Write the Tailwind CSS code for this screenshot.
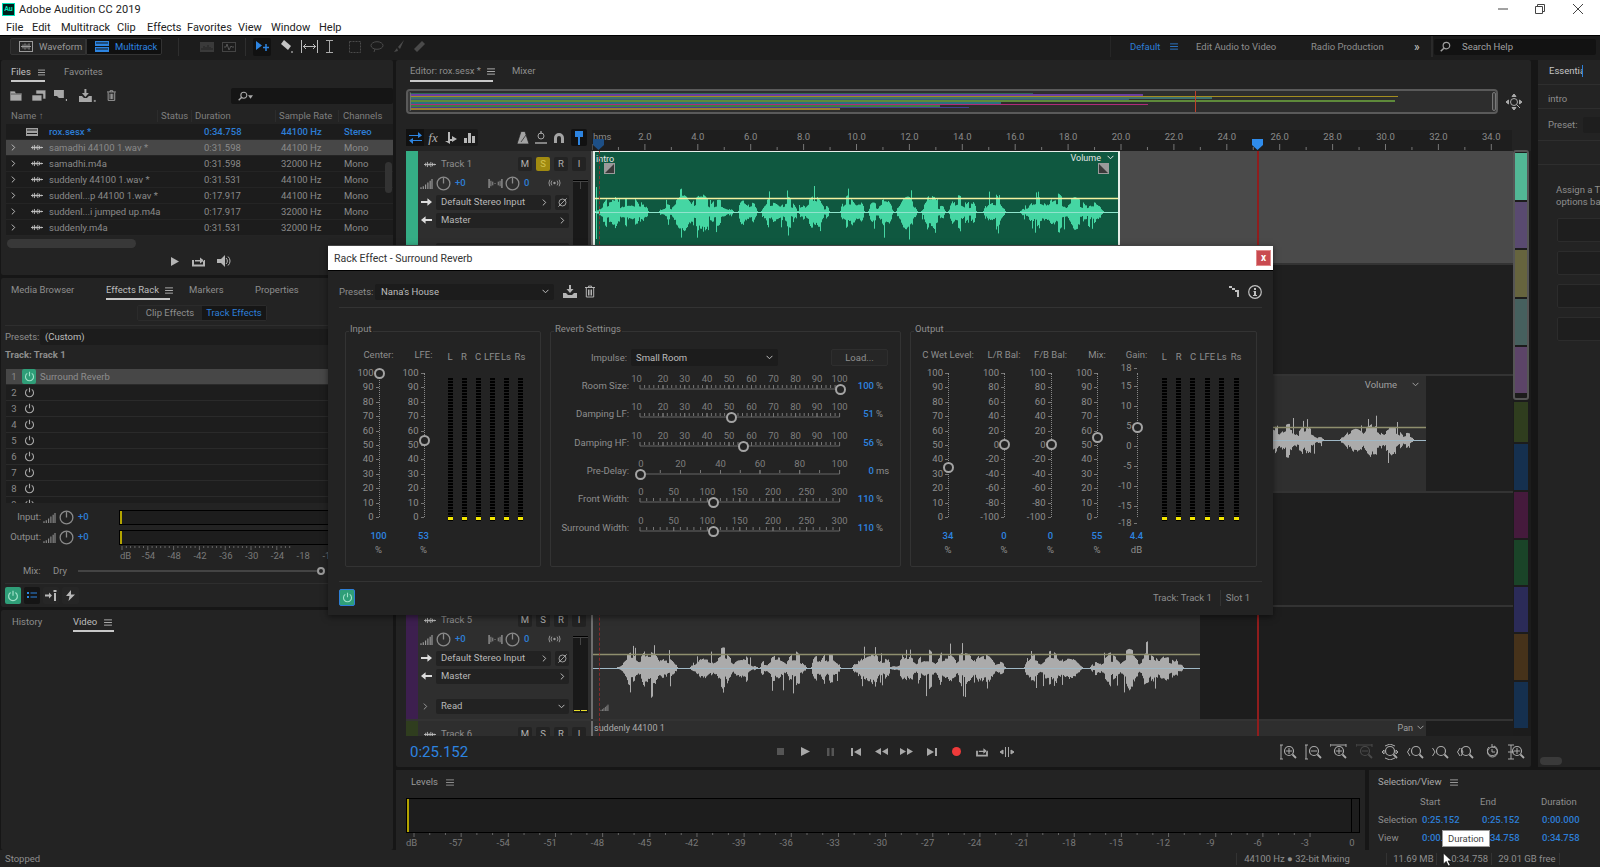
<!DOCTYPE html>
<html lang="en">
<head>
<meta charset="UTF-8">
<title>Adobe Audition CC 2019</title>
<script src="https://cdn.jsdelivr.net/npm/@tailwindcss/browser@4"></script>
</head>
<body class="relative w-[1600px] h-[867px] overflow-hidden bg-[#161616] font-['Roboto',sans-serif] text-[9.500px] leading-[12px] text-[#8e8e8e]">

<!-- shared icons -->
<svg class="absolute w-0 h-0">
  <symbol id="menu" viewBox="0 0 9 8"><path d="M0 1h9M0 4h9M0 7h9" stroke="currentColor" fill="none"/></symbol>
  <symbol id="power" viewBox="0 0 12 12"><path d="M3.600 2.600a4.400 4.400 0 1 0 4.800 0M6 .8v5" stroke="currentColor" stroke-width="1.200" fill="none"/></symbol>
  <symbol id="mono" viewBox="0 0 14 8"><path d="M0 4h14M2 2v4M4 1v6M6 2.500v3M8 1v6M10 2v4M12 3v2" stroke="currentColor" fill="none"/></symbol>
  <symbol id="knob" viewBox="0 0 16 16"><circle cx="8" cy="8" r="6.800" stroke="currentColor" stroke-width="1.400" fill="none"/><path d="M8 8V1.500" stroke="currentColor" stroke-width="1.400"/></symbol>
  <symbol id="bars" viewBox="0 0 14 12"><path d="M1 12v-2M3.500 12V9M6 12V7M8.500 12V5M11 12V3M13 12V1" stroke="currentColor" stroke-width="1.300"/></symbol>
  <symbol id="chev-r" viewBox="0 0 6 8"><path d="M1 .5 4.500 4 1 7.500" stroke="currentColor" stroke-width="1.200" fill="none"/></symbol>
  <symbol id="chev-d" viewBox="0 0 8 6"><path d="M.5 1 4 4.500 7.500 1" stroke="currentColor" stroke-width="1.200" fill="none"/></symbol>
  <symbol id="mag" viewBox="0 0 12 12"><circle cx="5" cy="5" r="3.600" stroke="currentColor" stroke-width="1.300" fill="none"/><path d="m7.800 7.800 3.400 3.400" stroke="currentColor" stroke-width="1.600"/></symbol>
  <symbol id="trash" viewBox="0 0 10 12"><path d="M0 2h10M3.500 2V.6h3V2M1.300 2.500v9h7.400v-9M3.500 4v6M5 4v6M6.500 4v6" stroke="currentColor" fill="none"/></symbol>
  <symbol id="saveto" viewBox="0 0 14 13"><path d="M6 0h2v4h2.500L7 8 3.500 4H6zM0 8h3l2 2h4l2-2h3v5H0z" fill="currentColor"/></symbol>
  <symbol id="arrow-r" viewBox="0 0 12 8"><path d="M0 3h7V0l5 4-5 4V5H0z" fill="currentColor"/></symbol>
  <symbol id="arrow-l" viewBox="0 0 12 8"><path d="M12 3H5V0L0 4l5 4V5h7z" fill="currentColor"/></symbol>
  <symbol id="panico" viewBox="0 0 16 12"><path d="M1 1v10M15 1v10" stroke="currentColor" stroke-width="1.400"/><path d="M3 3v6M5 4v4M11 4v4M13 3v6M7.500 5.500v1" stroke="currentColor"/></symbol>
  <symbol id="radio" viewBox="0 0 14 8"><circle cx="7" cy="4" r="1.300" fill="currentColor"/><path d="M4.200 1.500a4 4 0 0 0 0 5M9.800 1.500a4 4 0 0 1 0 5M2 .5a7 7 0 0 0 0 7M12 .5a7 7 0 0 1 0 7" stroke="currentColor" fill="none"/></symbol>
  <symbol id="noslash" viewBox="0 0 12 12"><circle cx="6" cy="6" r="3.800" stroke="currentColor" fill="none"/><path d="M1.500 10.500l9-9" stroke="currentColor"/></symbol>
  <symbol id="fade-in" viewBox="0 0 11 11"><rect width="11" height="11" fill="#9a9a9a"/><path d="M1 10 10 1v9z" fill="#3a3a3a"/></symbol>
  <symbol id="fade-out" viewBox="0 0 11 11"><rect width="11" height="11" fill="#9a9a9a"/><path d="M1 1l9 9H1z" fill="#3a3a3a"/></symbol>
</svg>

<!-- title bar -->
<header class="h-[36px] bg-white border-b border-black text-[#222] text-[11px] leading-[14px]">
  <div class="flex items-center h-[19px] pl-[2px]">
    <div class="w-[13px] h-[13px] bg-[#00201d] border border-[#00e4bb] text-[#00e4bb] text-[7px] leading-[11px] font-bold text-center">Au</div>
    <span class="ml-[4px] tracking-[0.1px]">Adobe Audition CC 2019</span>
    <div class="ml-auto flex items-center pr-[17px] pb-[2px] text-[#444]">
      <svg class="w-[10px] h-[10px]"><path d="M0 5h10" stroke="currentColor"/></svg>
      <svg class="w-[10px] h-[10px] ml-[27px]"><path d="M.5 2.500h7v7h-7zM2.500 2.500v-2h7v7h-2" stroke="currentColor" fill="none"/></svg>
      <svg class="w-[10px] h-[10px] ml-[28px]"><path d="M0 0l10 10M10 0 0 10" stroke="currentColor"/></svg>
    </div>
  </div>
  <nav class="flex h-[16px] items-center pl-[6px] pt-[1px]">
    <span class="w-[26px]">File</span><span class="w-[29px]">Edit</span><span class="w-[56px]">Multitrack</span><span class="w-[30px]">Clip</span><span class="w-[40px]">Effects</span><span class="w-[51px]">Favorites</span><span class="w-[33px]">View</span><span class="w-[48px]">Window</span><span>Help</span>
  </nav>
</header>

<!-- toolbar -->
<div class="flex items-center h-[24px] pb-[3px] pl-[10px] bg-[#1c1c1c]">
  <div class="flex items-center w-[76px] h-[17px] pl-[8px] bg-[#262626] border border-[#333] rounded-l-[2px] text-[#9a9a9a]">
    <svg class="w-[14px] h-[11px]" viewBox="0 0 14 11"><rect x=".5" y=".5" width="13" height="10" fill="none" stroke="currentColor"/><path d="M2 5.500h10M4 3.500v4M6 2.500v6M8 3.500v4M10 2.500v6" stroke="currentColor"/></svg>
    <span class="ml-[6px]">Waveform</span>
  </div>
  <div class="flex items-center w-[76px] h-[17px] pl-[8px] bg-[#101010] border border-[#333] rounded-r-[2px] text-[#2d84e0]">
    <svg class="w-[14px] h-[11px]" viewBox="0 0 14 11"><path d="M0 0h14v5H0zM0 6h14v5H0z" fill="currentColor"/><path d="M1 2h12M1 8h12" stroke="#101010"/></svg>
    <span class="ml-[6px]">Multitrack</span>
  </div>
  <div class="ml-[16px] w-[1px] h-[18px] bg-[#2e2e2e]"></div>
  <div class="ml-[21px] flex gap-[8px] text-[#4a4a4a]">
    <svg class="w-[14px] h-[10px]" viewBox="0 0 14 10"><rect width="14" height="10" fill="#3a3a3a"/><path d="M2 8V6M4 8V4M6 8V5M8 8V3M10 8V5M12 8V6" stroke="#222"/></svg>
    <svg class="w-[14px] h-[10px]" viewBox="0 0 14 10"><rect x=".5" y=".5" width="13" height="9" fill="none" stroke="#444"/><path d="M2 5h2l1-3 2 6 2-4 1 1h2" stroke="#555" fill="none"/></svg>
  </div>
  <div class="ml-[9px] w-[1px] h-[18px] bg-[#2e2e2e]"></div>
  <div class="ml-[7px] flex items-center justify-center w-[18px] h-[18px] bg-[#111] rounded-[2px] text-[#2d84e0]">
    <svg class="w-[15px] h-[13px]" viewBox="0 0 15 13"><path d="M1 1l6 4.500L1 10z" fill="currentColor"/><path d="M11 4v7M8 7.500h6" stroke="currentColor" stroke-width="1.500"/></svg>
  </div>
  <svg class="ml-[8px] w-[15px] h-[15px] text-[#c4c4c4]" viewBox="0 0 15 15"><path d="M5 1l7 6-3 4-7-6z" fill="currentColor"/><path d="M12 12h2v2h-2z" fill="#777"/></svg>
  <svg class="ml-[7px] w-[17px] h-[13px] text-[#bbb]" viewBox="0 0 17 13"><path d="M.5 0v13M16.500 0v13M2 6.500h13M5 4 2.500 6.500 5 9M12 4l2.500 2.500L12 9" stroke="currentColor" fill="none"/></svg>
  <svg class="ml-[7px] w-[9px] h-[13px] text-[#aaa]" viewBox="0 0 9 13"><path d="M1 .5h7M1 12.500h7M4.500 .5v12" stroke="currentColor" fill="none"/></svg>
  <div class="ml-[15px] flex items-center gap-[9px] text-[#4a4a4a]">
    <svg class="w-[12px] h-[12px]" viewBox="0 0 12 12"><rect x=".5" y=".5" width="11" height="11" fill="none" stroke="currentColor" stroke-dasharray="2 1"/></svg>
    <svg class="w-[14px] h-[12px]" viewBox="0 0 14 12"><ellipse cx="7" cy="4.500" rx="6" ry="3.800" fill="none" stroke="currentColor"/><path d="M5 8l-1 3" stroke="currentColor"/></svg>
    <svg class="w-[12px] h-[13px]" viewBox="0 0 12 13"><path d="M11 0 5 7l2 2zM4 8 1 12l4-1z" fill="currentColor"/></svg>
    <svg class="w-[12px] h-[13px]" viewBox="0 0 12 13"><path d="M3 12l8-8-3-3-8 8z" fill="currentColor"/></svg>
  </div>
  <!-- workspace switcher: starts at x 1110 -->
  <div class="ml-auto flex items-center w-[490px] h-full text-[#8e8e8e]">
    <div class="w-[1px] h-full bg-[#262626]"></div>
    <span class="ml-[19px] w-[40px] text-[#2d7ed6]">Default</span>
    <svg class="w-[8px] h-[7px] text-[#2d7ed6]"><use href="#menu"/></svg>
    <span class="ml-[18px] w-[115px]">Edit Audio to Video</span>
    <span class="w-[103px]">Radio Production</span>
    <span class="w-[17px] text-[#ccc] text-[12px]">»</span>
    <div class="w-[2px] h-full bg-[#2a2a2a]"></div>
    <div class="ml-[1px] flex items-center w-[162px] h-[16px] pl-[6px] bg-[#121212] rounded-[2px] text-[#a0a0a0]">
      <svg class="w-[11px] h-[11px] -scale-x-100"><use href="#mag"/></svg>
      <span class="ml-[11px]">Search Help</span>
    </div>
  </div>
</div>

<div class="flex h-[790px]">
  <!-- left column -->
  <div class="w-[392px] ml-[1px] flex flex-col gap-[3px]">
    <!-- files -->
    <section class="h-[215px] bg-[#232323] rounded-[2px]">
      <div class="flex h-[21px] pl-[10px] pt-[6px]">
        <div class="flex w-[34px] h-[16px] items-start gap-[7px] border-b-2 border-[#c8c8c8] text-[#c0c0c0]"><span>Files</span><svg class="w-[8px] h-[7px] mt-[3px]"><use href="#menu"/></svg></div>
        <span class="ml-[19px]">Favorites</span>
      </div>
      <div class="flex items-center h-[21px] mt-[4px] pl-[9px] text-[#a8a8a8]">
        <svg class="w-[12px] h-[10px]" viewBox="0 0 12 10"><path d="M0 0h5l1 2h6v8H0zM1 3h10" fill="currentColor" stroke="#232323" stroke-width=".6"/></svg>
        <svg class="ml-[10px] w-[14px] h-[11px]" viewBox="0 0 14 11"><path d="M4 0h10v9h-3V4H4zM0 5h10v6H0z" fill="currentColor" stroke="#232323" stroke-width=".6"/></svg>
        <svg class="ml-[8px] w-[14px] h-[11px]" viewBox="0 0 14 11"><path d="M0 0h10v8H5L3 6H0zM12 9h2v2h-2z" fill="currentColor"/></svg>
        <svg class="ml-[12px] w-[17px] h-[13px]" viewBox="0 0 17 13"><path d="M5.500 0h2v4h2.500l-3.500 4L3 4h2.500zM0 7h3l2 2h3l2-2h3v6H0z" fill="currentColor"/><path d="M15 11h2v2h-2z" fill="#888"/></svg>
        <svg class="ml-[11px] w-[9px] h-[11px]"><use href="#trash"/></svg>
        <div class="ml-[115px] flex items-center w-[164px] h-[16px] pl-[7px] bg-[#151515] rounded-[2px] text-[#aaa]">
          <svg class="w-[10px] h-[10px] -scale-x-100"><use href="#mag"/></svg>
          <svg class="w-[5px] h-[4px] mt-[3px]" viewBox="0 0 6 4"><path d="M0 0h6L3 4z" fill="currentColor"/></svg>
        </div>
      </div>
      <div class="grid grid-cols-[146px_34px_84px_63px_60px] h-[15px] mt-[2px] pl-[10px] items-center text-[#7f7f7f]">
        <span>Name ↑</span>
        <span class="pl-[3px] border-l border-[#2c2c2c]">Status</span>
        <span class="pl-[3px] border-l border-[#2c2c2c]">Duration</span>
        <span class="pl-[3px] border-l border-[#2c2c2c]">Sample Rate</span>
        <span class="pl-[4px] border-l border-[#2c2c2c]">Channels</span>
      </div>
      <div class="relative ml-[5px] w-[387px] h-[112px] mt-[1px] bg-[#1c1c1c]" id="file-list"></div>
      <div class="flex items-center h-[24px] mt-[13px] pl-[170px] text-[#b4b4b4]">
        <svg class="w-[8px] h-[9px]" viewBox="0 0 8 9"><path d="M0 0l8 4.500L0 9z" fill="currentColor"/></svg>
        <svg class="ml-[13px] w-[13px] h-[11px]" viewBox="0 0 13 11"><path d="M0 4v6.500h13V4h-2v4.500H2V4zM3 4h5V1.500L12 4.500 8 7.500V5.500H3z" fill="currentColor"/></svg>
        <svg class="ml-[10px] w-[17px] h-[12px]" viewBox="0 0 17 12"><path d="M0 4h4l4-4v12L4 8H0z" fill="currentColor" transform="translate(2)"/><path d="M11 3a4 4 0 0 1 0 6M13 1.500a6 6 0 0 1 0 9" stroke="currentColor" fill="none"/></svg>
      </div>
    </section>
    <!-- effects rack -->
    <section class="h-[329px] bg-[#232323] rounded-[2px]">
      <div class="flex h-[22px] pl-[10px] pt-[6px]">
        <span class="w-[95px]">Media Browser</span>
        <div class="flex w-[64px] h-[16px] gap-[6px] items-start border-b-2 border-[#c8c8c8] text-[#bdbdbd]"><span class="whitespace-nowrap">Effects Rack</span><svg class="w-[8px] h-[7px] mt-[3px] shrink-0"><use href="#menu"/></svg></div>
        <span class="ml-[19px] w-[66px]">Markers</span>
        <span>Properties</span>
      </div>
      <div class="flex justify-center ml-[136px] mt-[5px] w-[130px] h-[16px] bg-[#1c1c1c] rounded-[2px] border border-[#2b2b2b]">
        <span class="flex-1 text-center text-[#8e8e8e] bg-[#242424] leading-[14px]">Clip Effects</span>
        <span class="flex-1 text-center text-[#2d7ed6] bg-[#161616] leading-[14px]">Track Effects</span>
      </div>
      <div class="mt-[4px] h-[1px] bg-[#2e2e2e] mx-[4px]"></div>
      <div class="flex items-center mt-[3px] h-[16px] pl-[4px]">
        <span class="w-[35px]">Presets:</span>
        <div class="flex items-center flex-1 h-[16px] pl-[5px] pr-[3px] bg-[#1c1c1c] rounded-[2px] text-[#bcbcbc]"><span>(Custom)</span><svg class="ml-[264px] w-[7px] h-[5px]"><use href="#chev-d"/></svg></div>
      </div>
      <div class="h-[14px] mt-[4px] pl-[4px] font-bold text-[#8e8e8e]">Track: Track 1</div>
      <div id="rack-list" class="ml-[5px] mt-[6px] h-[134px] overflow-hidden bg-[#1d1d1d]"></div>
      <div class="mt-[4px] h-[20px] flex items-center">
        <span class="w-[40px] text-right">Input:</span>
        <svg class="ml-[2px] w-[13px] h-[11px] text-[#888]"><use href="#bars"/></svg>
        <svg class="ml-[3px] w-[15px] h-[15px] text-[#8a8a8a]"><use href="#knob"/></svg>
        <span class="ml-[4px] w-[41px] text-[#2d7ed6] font-medium">+0</span>
        <div class="relative w-[270px] h-[15px] bg-[#1d1d1d] border border-black"><div class="absolute inset-y-0 left-0 w-[2px] bg-[#b3a400]"></div></div>
      </div>
      <div class="h-[20px] flex items-center">
        <span class="w-[40px] text-right">Output:</span>
        <svg class="ml-[2px] w-[13px] h-[11px] text-[#888]"><use href="#bars"/></svg>
        <svg class="ml-[3px] w-[15px] h-[15px] text-[#8a8a8a]"><use href="#knob"/></svg>
        <span class="ml-[4px] w-[41px] text-[#2d7ed6] font-medium">+0</span>
        <div class="relative w-[270px] h-[15px] bg-[#1d1d1d] border border-black"><div class="absolute inset-y-0 left-0 w-[2px] bg-[#b3a400]"></div></div>
      </div>
      <svg id="rack-ticks" class="block -mt-[1px] ml-[120px] w-[270px] h-[5px]"></svg>
      <div id="rack-scale" class="relative ml-[120px] w-[270px] h-[10px] leading-[10px] text-[#7a7a7a]"></div>
      <div class="flex items-center h-[16px] mt-[2px]">
        <span class="ml-[22px] w-[30px]">Mix:</span>
        <span class="w-[25px]">Dry</span>
        <div class="relative w-[239px] h-[2px] bg-[#444]"><div class="absolute -right-[8px] -top-[3px] w-[8px] h-[8px] rounded-full border-2 border-[#9a9a9a] bg-[#232323]"></div></div>
      </div>
      <div class="mt-[4px] mx-[4px] h-[1px] bg-[#2e2e2e]"></div>
      <div class="flex gap-[3px] mt-[3px] pl-[4px]">
        <div class="flex items-center justify-center w-[16px] h-[17px] bg-[#2f9e78] rounded-[2px] text-[#9fe0c8]"><svg class="w-[12px] h-[12px]"><use href="#power"/></svg></div>
        <div class="flex items-center justify-center w-[16px] h-[17px] bg-[#151515] rounded-[2px] text-[#2d84e0]"><svg class="w-[10px] h-[7px]" viewBox="0 0 10 7"><path d="M0 0h2v2H0zM0 4h2v2H0zM3.500 .5H10v1H3.500zM3.500 4.500H10v1H3.500z" fill="currentColor"/></svg></div>
        <div class="flex items-center justify-center w-[16px] h-[17px] bg-[#262626] rounded-[2px] text-[#b8b8b8]"><svg class="w-[12px] h-[11px]" viewBox="0 0 12 11"><path d="M0 4.500h4V2.500l3 3-3 3V6.500H0zM9 3h2v8H9zM8.500 0h3v2h-3z" fill="currentColor"/></svg></div>
        <div class="flex items-center justify-center w-[17px] h-[17px] bg-[#262626] rounded-[2px] text-[#b8b8b8]"><svg class="w-[9px] h-[11px]" viewBox="0 0 9 11"><path d="M5 0 0 6h3.500L2.500 11 9 4.500H5z" fill="currentColor"/></svg></div>
      </div>
    </section>
    <!-- history / video -->
    <section class="flex-1 bg-[#232323] rounded-[2px] flex pl-[11px] pt-[6px] items-start">
      <span class="w-[61px]">History</span>
      <div class="flex w-[41px] h-[16px] gap-[7px] items-start border-b-2 border-[#c8c8c8] text-[#bdbdbd]"><span>Video</span><svg class="w-[8px] h-[7px] mt-[3px]"><use href="#menu"/></svg></div>
    </section>
  </div>

  <!-- editor + bottom row -->
  <div class="ml-[3px] flex-1 flex flex-col gap-[3px]">
    <div class="flex h-[707px]">
      <!-- editor -->
      <section class="w-[1135px] bg-[#232323] rounded-[2px] pl-[10px]">
        <div class="flex h-[25px] pt-[5px] pl-[4px]">
          <div class="flex w-[83px] h-[17px] gap-[6px] items-start border-b-2 border-[#c8c8c8] text-[#8e8e8e] whitespace-nowrap"><span>Editor: rox.sesx *</span><svg class="w-[8px] h-[7px] mt-[3px] shrink-0 text-[#bbb]"><use href="#menu"/></svg></div>
          <span class="ml-[19px]">Mixer</span>
        </div>
        <div class="flex items-center mt-[4px] h-[25px]">
          <div class="relative w-[1092px] h-[25px] bg-[#2d2d2d] border-2 border-[#5a5a5a] rounded-[4px] pl-[3px] pt-[1.500px] flex flex-col" id="overview"></div>
          <svg class="ml-[8px] w-[16px] h-[16px] text-[#aaa]" viewBox="0 0 16 16"><circle cx="8" cy="8" r="3.500" stroke="currentColor" fill="none"/><path d="M8 0l2 2.500H6zM8 16l2-2.500H6zM0 8l2.500-2v4zM16 8l-2.500-2v4zM10.500 10.500 14 14" stroke="currentColor" fill="currentColor"/></svg>
        </div>
        <div class="flex mt-[16px] h-[21px]">
          <div class="flex items-center w-[186px] h-[15px]">
            <div class="flex items-center h-[17px] bg-[#1a1a1a] rounded-[2px]">
              <div class="flex items-center justify-center w-[18px] h-[17px] bg-[#111] text-[#2d84e0]"><svg class="w-[13px] h-[12px]" viewBox="0 0 13 12"><path d="M0 3h9V0l4 3.500L9 6V4H0zM13 8H4V6L0 8.500 4 12V9h9z" fill="currentColor"/></svg></div>
              <span class="w-[18px] text-center italic text-[13px] text-[#b0b0b0] font-['Liberation_Serif',serif]">fx</span>
              <div class="flex items-center justify-center w-[18px]"><svg class="w-[12px] h-[12px] text-[#b8b8b8]" viewBox="0 0 12 12"><path d="M3 0h2v7h2V4l5 3-5 3V9H5v3L0 9h3z" fill="currentColor"/></svg></div>
              <div class="flex items-center justify-center w-[18px]"><svg class="w-[11px] h-[10px] text-[#b8b8b8]" viewBox="0 0 11 10"><path d="M0 5h3v5H0zM4 0h3v10H4zM8 3h3v7H8z" fill="currentColor"/></svg></div>
            </div>
            <div class="flex items-center ml-[39px] gap-[6px] text-[#a4a4a4]">
              <svg class="w-[12px] h-[13px]" viewBox="0 0 12 13"><path d="M4 .5h4L12 13H0zM4 11l5-7" stroke="#232323" stroke-width=".7" fill="currentColor"/></svg>
              <svg class="w-[12px] h-[13px]" viewBox="0 0 12 13"><circle cx="6" cy="5" r="3" fill="none" stroke="currentColor"/><path d="M6 0v3M0 12h12" stroke="currentColor" stroke-width="1.300"/></svg>
              <svg class="w-[12px] h-[12px]" viewBox="0 0 12 12"><path d="M1 11V6a5 5 0 0 1 10 0v5H8V6a2 2 0 0 0-4 0v5z" fill="currentColor"/></svg>
              <div class="flex items-center justify-center w-[16px] h-[17px] bg-[#111] rounded-[2px] text-[#2d84e0]"><svg class="w-[8px] h-[14px]" viewBox="0 0 8 14"><path d="M0 0h8v6H5v8H3V6H0z" fill="currentColor"/></svg></div>
            </div>
          </div>
          <div id="ruler" class="relative w-[920px] h-[21px] bg-[#1e1e1e] overflow-hidden"></div>
        </div>
        <div class="relative flex h-[585px] bg-[#1c1c1c]">
          <div id="tracks" class="w-[1107px] flex flex-col"></div>
          <div class="relative flex flex-col gap-[2px] w-[14px] pt-[2px] ml-[1px]" id="track-scroll"></div>
          <!-- playhead and start marker lie over the lanes -->
          <div class="absolute top-0 bottom-0 left-[851px] w-[2px] bg-[#8f1d1d]"></div>
          <div class="absolute top-0 bottom-0 left-[193px] border-l border-dashed border-[#a02828]/80"></div>
        </div>
        <div class="flex items-center h-[31px] text-[#a8a8a8]">
          <span class="ml-[4px] w-[358px] text-[15px] text-[#2d84e0]">0:25.152</span>
          <div class="w-[25px] flex justify-center"><div class="w-[7px] h-[7px] bg-[#555]"></div></div>
          <div class="w-[25px] flex justify-center"><svg class="w-[9px] h-[9px]" viewBox="0 0 9 9"><path d="M0 0l9 4.500L0 9z" fill="currentColor"/></svg></div>
          <div class="w-[25px] flex justify-center"><svg class="w-[7px] h-[8px] text-[#555]" viewBox="0 0 7 8"><path d="M0 0h2.500v8H0zM4.500 0H7v8H4.500z" fill="currentColor"/></svg></div>
          <div class="w-[25px] flex justify-center"><svg class="w-[10px] h-[8px]" viewBox="0 0 10 8"><path d="M0 0h2v8H0zM10 0v8L3 4z" fill="currentColor"/></svg></div>
          <div class="w-[26px] flex justify-center"><svg class="w-[13px] h-[7px]" viewBox="0 0 13 7"><path d="M6 0v7L0 3.500zM13 0v7L7 3.500z" fill="currentColor"/></svg></div>
          <div class="w-[25px] flex justify-center"><svg class="w-[13px] h-[7px]" viewBox="0 0 13 7"><path d="M0 0v7l6-3.500zM7 0v7l6-3.500z" fill="currentColor"/></svg></div>
          <div class="w-[25px] flex justify-center"><svg class="w-[10px] h-[8px]" viewBox="0 0 10 8"><path d="M8 0h2v8H8zM0 0v8l7-4z" fill="currentColor"/></svg></div>
          <div class="w-[25px] flex justify-center"><div class="w-[9px] h-[9px] rounded-full bg-[#ee3a3a]"></div></div>
          <div class="w-[25px] flex justify-center"><svg class="w-[12px] h-[10px]" viewBox="0 0 13 11"><path d="M0 4v6.500h13V4h-2v4.500H2V4zM3 4h5V1.500L12 4.500 8 7.500V5.500H3z" fill="currentColor"/></svg></div>
          <div class="w-[25px] flex justify-center"><svg class="w-[14px] h-[10px]" viewBox="0 0 14 10"><path d="M5.500 0v10M8.500 0v10M3 3 0 5l3 2zM11 3l3 2-3 2z" stroke="currentColor" fill="currentColor"/></svg></div>
          <div class="ml-[257px] flex items-center" id="zoom-icons"></div>
        </div>
      </section>
      <!-- essential sound -->
      <section class="ml-[7px] w-[62px] bg-[#232323] text-[#8e8e8e] overflow-hidden">
        <div class="h-[24px] pl-[11px] pt-[5px] text-[#c4c4c4]"><div class="w-[34px] h-[12px] overflow-hidden border-r border-[#2d7ed6]">Essential</div></div>
        <div class="h-[1px] bg-[#2e2e2e]"></div>
        <div class="h-[23px] pl-[10px] pt-[8px]">intro</div>
        <div class="h-[1px] bg-[#2e2e2e]"></div>
        <div class="flex items-center h-[31px] pl-[10px]"><span>Preset:</span><div class="ml-[5px] w-[40px] h-[16px] shrink-0 bg-[#1e1e1e] rounded-[2px]"></div></div>
        <div class="h-[1px] bg-[#2e2e2e]"></div>
        <div class="mt-[23px] h-[1px] bg-[#2e2e2e]"></div>
        <div class="pl-[18px] pt-[19px] w-[160px] h-[53px] leading-[12px]">Assign a Track Type for<br>options based on content</div>
        <div class="ml-[19px] mt-[0px] flex flex-col gap-[9px]">
          <div class="w-[60px] h-[24px] bg-[#1e1e1e] border border-[#2c2c2c] rounded-[2px]"></div>
          <div class="w-[60px] h-[24px] bg-[#1e1e1e] border border-[#2c2c2c] rounded-[2px]"></div>
          <div class="w-[60px] h-[24px] bg-[#1e1e1e] border border-[#2c2c2c] rounded-[2px]"></div>
          <div class="w-[60px] h-[24px] bg-[#1e1e1e] border border-[#2c2c2c] rounded-[2px]"></div>
        </div>
        <div class="mt-[416px] ml-[2px] w-[22px] h-[8px] rounded-full bg-[#3a3a3a]"></div>
      </section>
    </div>
    <!-- levels + selection -->
    <div class="flex h-[80px] gap-[4px]">
      <section class="w-[969px] bg-[#232323] pl-[10px]">
        <div class="flex items-center h-[24px] pl-[5px] text-[#9a9a9a]"><span>Levels</span><svg class="ml-[8px] w-[8px] h-[7px]"><use href="#menu"/></svg></div>
        <div class="relative w-[954px] h-[35px] mt-[4px] bg-[#1d1d1d] border border-black"><div class="absolute left-0 inset-y-0 w-[2px] bg-[#b3a400]"></div><div class="absolute right-0 inset-y-0 w-[8px] border-l border-black"></div></div>
        <svg id="lvl-ticks" class="block w-[954px] h-[4px]"></svg>
        <div id="lvl-scale" class="relative w-[954px] h-[11px] text-[#7a7a7a]"></div>
      </section>
      <section class="relative flex-1 bg-[#232323] pl-[9px]">
        <div class="flex items-center h-[24px] text-[#a8a8a8]"><span>Selection/View</span><svg class="ml-[8px] w-[8px] h-[7px]"><use href="#menu"/></svg></div>
        <div class="grid grid-cols-[44px_60px_60px_60px] mt-[2px] leading-[12px] gap-y-[6px]">
          <span></span><span class="-ml-[2px]">Start</span><span class="-ml-[2px]">End</span><span class="-ml-[1px]">Duration</span>
          <span>Selection</span><span class="text-[#2d7ed6] font-medium">0:25.152</span><span class="text-[#2d7ed6] font-medium">0:25.152</span><span class="text-[#2d7ed6] font-medium">0:00.000</span>
          <span>View</span><span class="text-[#2d7ed6] font-medium">0:00.000</span><span class="text-[#2d7ed6] font-medium">0:34.758</span><span class="text-[#2d7ed6] font-medium">0:34.758</span>
        </div>
        <!-- tooltip over the view row -->
        <div class="absolute left-[73px] top-[60px] w-[48px] h-[17px] bg-white border border-[#999] text-[#444] text-center leading-[15px]">Duration</div>
      </section>
    </div>
  </div>
</div>

<!-- status bar -->
<footer class="flex items-center h-[17px] bg-[#232323] pl-[5px] text-[#8e8e8e]">
  <span>Stopped</span>
  <div class="ml-[1196px] w-[1px] h-[12px] bg-[#333]"></div>
  <span class="ml-[7px] w-[142px]">44100 Hz ● 32-bit Mixing</span>
  <div class="w-[1px] h-[12px] bg-[#333]"></div>
  <span class="ml-[6px] w-[43px]">11.69 MB</span>
  <div class="w-[1px] h-[12px] bg-[#333]"></div>
  <span class="ml-[14px] w-[40px]">0:34.758</span>
  <div class="w-[1px] h-[12px] bg-[#333]"></div>
  <span class="ml-[6px] w-[61px]">29.01 GB free</span>
  <div class="w-[1px] h-[12px] bg-[#333]"></div>
</footer>

<!-- mouse pointer -->
<svg class="absolute left-[1442px] top-[853px] w-[12px] h-[14px]" viewBox="0 0 12 15"><path d="M1 0v12l3-3 2.500 5 2-1L6 8.500h4z" fill="#fff" stroke="#000" stroke-width=".7"/></svg>

<!-- floating rack effect window -->
<div class="absolute left-[328px] top-[245px] w-[945px] h-[370px] bg-[#232323] shadow-[0_2px_6px_rgba(0,0,0,0.5)]">
  <div class="flex items-center justify-between h-[26px] bg-white border-t border-[#444] border-b border-b-black pl-[6px] pr-[2px] text-[#333] text-[10.500px]">
    <span class="pt-[1px]">Rack Effect - Surround Reverb</span>
    <div class="flex items-center justify-center w-[15px] h-[16px] bg-[#c94a50] border border-[#e08a8a] text-white font-bold text-[10px] leading-[10px]">x</div>
  </div>
  <div class="flex items-center h-[37px] pt-[5px] mx-[11px] border-b border-[#333]">
    <span class="w-[36px]">Presets:</span>
    <div class="flex items-center w-[179px] h-[16px] pl-[6px] pr-[5px] bg-[#1c1c1c] rounded-[2px] text-[#bcbcbc]"><span>Nana's House</span><svg class="ml-auto w-[7px] h-[5px]"><use href="#chev-d"/></svg></div>
    <svg class="ml-[9px] w-[14px] h-[13px] text-[#b4b4b4]"><use href="#saveto"/></svg>
    <svg class="ml-[8px] w-[10px] h-[13px] text-[#b4b4b4]"><use href="#trash"/></svg>
    <svg class="ml-auto w-[10px] h-[11px] text-[#c0c0c0]" viewBox="0 0 10 11"><path d="M0 0h3v2H0zM3 2h3v2H3zM6 4h4v2H6zM8 6h2v5H8z" fill="currentColor"/></svg>
    <svg class="ml-[9px] w-[14px] h-[14px] text-[#c0c0c0]" viewBox="0 0 14 14"><circle cx="7" cy="7" r="6.300" fill="none" stroke="currentColor" stroke-width="1.200"/><path d="M6 3h2v2H6zM5.500 6H8v4h1v1H5v-1h1V7h-.5z" fill="currentColor"/></svg>
  </div>
  <div class="flex gap-[9px] mt-[23px] ml-[17px]">
    <!-- Input -->
    <div class="relative w-[196px] h-[236px] border border-[#333] rounded-[2px]">
      <span class="absolute left-[3px] -top-[9px] px-[1px] bg-[#232323]">Input</span>
      <div id="input-group" class="flex pl-[11px] pt-[16px]"></div>
    </div>
    <!-- Reverb settings -->
    <div class="relative w-[351px] h-[236px] border border-[#333] rounded-[2px]">
      <span class="absolute left-[3px] -top-[9px] px-[1px] bg-[#232323]">Reverb Settings</span>
      <div class="flex items-center mt-[17px] h-[17px]">
        <span class="w-[76px] text-right">Impulse:</span>
        <div class="flex items-center ml-[4px] w-[147px] h-[17px] pl-[5px] pr-[5px] bg-[#1c1c1c] rounded-[2px] text-[#bcbcbc]"><span>Small Room</span><svg class="ml-auto w-[7px] h-[5px]"><use href="#chev-d"/></svg></div>
        <div class="ml-[53px] w-[57px] h-[17px] bg-[#262626] border border-[#2e2e2e] rounded-[2px] text-center leading-[15px]">Load...</div>
      </div>
      <div id="reverb-rows" class="mt-[6px]"></div>
    </div>
    <!-- Output -->
    <div class="relative w-[347px] h-[236px] border border-[#333] rounded-[2px]">
      <span class="absolute left-[3px] -top-[9px] px-[1px] bg-[#232323]">Output</span>
      <div id="output-group" class="flex pl-[7px] pt-[16px]"></div>
    </div>
  </div>
  <div class="mt-[14px] mx-[11px] h-[1px] bg-[#333]"></div>
  <div class="flex items-center mt-[7px] h-[17px] pl-[11px] pr-[23px]">
    <div class="flex items-center justify-center w-[16px] h-[17px] bg-[#2f9e78] border border-[#2d7ed6] rounded-[2px] text-[#9fe0c8]"><svg class="w-[11px] h-[11px]"><use href="#power"/></svg></div>
    <span class="ml-auto">Track: Track 1</span>
    <div class="ml-[8px] w-[1px] h-[16px] bg-[#333]"></div>
    <span class="ml-[5px]">Slot 1</span>
  </div>
</div>

<script>
  // small seeded random so the waveforms come out the same every run
  function makeRand(seed) {
    return function () {
      seed = (seed * 16807) % 2147483647;
      return (seed - 1) / 2147483646;
    };
  }

  function wavePath(bursts, cy, amp, seed) {
    const rand = makeRand(seed);
    let d = '';
    bursts.forEach(function (b) {
      let level = 0.5, hold = 0;
      for (let x = b[0]; x <= b[1]; x++) {
        const t = (x - b[0]) / (b[1] - b[0]);
        // syllable-like swells inside each burst
        const env = Math.pow(Math.sin(Math.PI * t), 0.5) * (0.45 + 0.55 * Math.abs(Math.sin(x * 0.16 + b[0])));
        if (hold-- <= 0) {
          level = 0.25 + 0.5 * rand();
          hold = 1 + Math.floor(rand() * 3);
        }
        const up = Math.max(1, amp * env * (rand() > 0.95 ? 1 : level));
        const down = Math.max(1, amp * 1.1 * env * (rand() > 0.95 ? 1 : level * (0.8 + 0.3 * rand())));
        d += 'M' + (x + 0.5) + ' ' + (cy - up).toFixed(1) + 'V' + (cy + down).toFixed(1);
      }
    });
    return d;
  }

  // files list
  const files = [
    ['rox.sesx *', '0:34.758', '44100 Hz', 'Stereo'],
    ['samadhi 44100 1.wav *', '0:31.598', '44100 Hz', 'Mono'],
    ['samadhi.m4a', '0:31.598', '32000 Hz', 'Mono'],
    ['suddenly 44100 1.wav *', '0:31.531', '44100 Hz', 'Mono'],
    ['suddenl...p 44100 1.wav *', '0:17.917', '44100 Hz', 'Mono'],
    ['suddenl...i jumped up.m4a', '0:17.917', '32000 Hz', 'Mono'],
    ['suddenly.m4a', '0:31.531', '32000 Hz', 'Mono']
  ];
  document.getElementById('file-list').innerHTML = files.map(function (f, i) {
    const rowBg = i === 1 ? 'bg-[#474747]' : 'bg-[#1c1c1c]';
    const textCol = i === 0 ? 'text-[#2d7ed6] font-medium' : 'text-[#8a8a8a]';
    const icon = i === 0
      ? '<svg class="ml-[-5px] w-[12px] h-[8px] text-[#a0a0a0]" viewBox="0 0 12 8"><path d="M0 0h12v8H0z" fill="currentColor"/><path d="M1 2h10M1 5.500h10" stroke="#1c1c1c"/></svg>'
      : '<svg class="w-[12px] h-[7px] text-[#c8c8c8]"><use href="#mono"/></svg>';
    const arrow = i === 0 ? '' : '<svg class="ml-[5px] w-[5px] h-[7px] text-[#bbb]"><use href="#chev-r"/></svg>';
    return '<div class="grid grid-cols-[25px_18px_155px_77px_63px_40px] items-center h-[16px] border-b border-[#242424] whitespace-nowrap ' + rowBg + ' ' + textCol + '">'
      + '<span>' + arrow + '</span><span>' + icon + '</span>'
      + '<span>' + f[0] + '</span><span>' + f[1] + '</span><span>' + f[2] + '</span><span>' + f[3] + '</span></div>';
  }).join('') + '<div class="absolute right-[1px] top-[38px] w-[7px] h-[31px] rounded-full bg-[#333]"></div>'
    + '<div class="absolute left-[1px] bottom-[-12px] w-[129px] h-[9px] rounded-full bg-[#383838]"></div>';

  // effects rack slots
  let rackHtml = '';
  for (let i = 1; i <= 9; i++) {
    const active = i === 1;
    rackHtml += '<div class="flex items-center h-[16px] border-b border-[#2a2a2a] ' + (active ? 'bg-[#474747]' : '') + '">'
      + '<span class="w-[16px] text-center text-[#8a8a8a]">' + i + '</span>'
      + '<div class="flex items-center justify-center w-[14px] h-[15px] rounded-[2px] ' + (active ? 'bg-[#2f9e78] text-[#9fe0c8]' : 'text-[#a8a8a8]') + '"><svg class="w-[11px] h-[11px]"><use href="#power"/></svg></div>'
      + (active ? '<span class="ml-[4px] text-[#8e8e8e]">Surround Reverb</span>' : '') + '</div>';
  }
  document.getElementById('rack-list').innerHTML = rackHtml;

  // rack meter scale
  let rackTicks = '', rackLabels = '';
  for (let i = 0; i < 40; i++) {
    const x = i * 4.3 + 1;
    rackTicks += '<line x1="' + x + '" x2="' + x + '" y1="0" y2="' + (i % 6 === 0 ? 4 : 2) + '" stroke="#666"/>';
  }
  document.getElementById('rack-ticks').innerHTML = rackTicks;
  ['dB', '-54', '-48', '-42', '-36', '-30', '-24', '-18', '-12'].forEach(function (l, i) {
    rackLabels += '<span class="absolute" style="left:' + (i === 0 ? -1 : 25.800 * i - 5) + 'px">' + l + '</span>';
  });
  document.getElementById('rack-scale').innerHTML = rackLabels;

  // overview lines
  const overviewLines = [
    ['#2e6a57', 622], ['#6c3fa0', 732], ['#a38d20', 987], ['#3d7070', 801], ['#3a5a78', 718],
    ['#5e8a3a', 984], ['#2c6f80', 590], ['#b02a78', 737], ['#3f7a45', 529], ['#3f3f90', 558], ['#9a7a30', 429]
  ];
  document.getElementById('overview').innerHTML = overviewLines.map(function (l) {
    return '<div class="h-[1.600px] shrink-0" style="width:' + l[1] + 'px;background:' + l[0] + '"></div>';
  }).join('') + '<div class="absolute top-0 bottom-0 left-[787px] w-[1px] bg-[#c0402a]"></div>'
    + '<div class="absolute top-[1px] bottom-[1px] right-[0px] w-[4px] rounded-[2px] border border-[#777] bg-[#3a3a3a]"></div>'
    + '<div class="absolute top-[1px] bottom-[1px] left-[0px] w-[3px] rounded-[2px] border-r border-[#777] bg-[#3a3a3a]"></div>';

  // time ruler
  let rulerSvg = '', rulerLabels = '<span class="absolute left-[1px] top-[1px] text-[#8a8a8a]">hms</span>';
  for (let sec = 0; sec <= 34; sec++) {
    const x = sec * 26.45;
    rulerSvg += '<line x1="' + x + '" x2="' + x + '" y1="' + (sec % 2 ? 17 : 14) + '" y2="20" stroke="#777"/>';
    if (sec % 2 === 0 && sec > 0) {
      rulerLabels += '<span class="absolute top-[1px] w-[30px] text-center text-[#8a8a8a]" style="left:' + (x - 15) + 'px">' + sec.toFixed(1) + '</span>';
    }
  }
  document.getElementById('ruler').innerHTML = '<svg class="absolute inset-0 w-[920px] h-[21px]">' + rulerSvg + '</svg>' + rulerLabels
    + '<svg class="absolute left-[1px] top-[9px] w-[11px] h-[12px]" viewBox="0 0 11 12"><path d="M0 0h11v6l-5.500 5L0 6z" fill="#1d4f86"/></svg>'
    + '<svg class="absolute left-[660px] top-[9px] w-[11px] h-[12px]" viewBox="0 0 11 12"><path d="M0 0h11v6l-5.500 5L0 6z" fill="#2f8cec"/></svg>';

  // track headers
  function trackHeader(name, solo, readText) {
    const btn = 'flex items-center justify-center w-[14px] h-[14px] rounded-[2px] bg-[#232323] text-[#b0b0b0]';
    return '<div class="w-[172px] h-full bg-[#2e2e2e] overflow-hidden">'
      + '<div class="flex items-center h-[16px] mt-[5px]">'
      + '<svg class="ml-[6px] w-[12px] h-[7px] text-[#c0c0c0]"><use href="#mono"/></svg>'
      + '<span class="ml-[5px] w-[77px] text-[#8e8e8e]">' + name + '</span>'
      + '<span class="' + btn + '">M</span>'
      + '<span class="ml-[4px] ' + btn + ' ' + (solo ? 'bg-[#a08a10] text-[#d2c24e]' : '') + '">S</span>'
      + '<span class="ml-[4px] ' + btn + '">R</span>'
      + '<span class="ml-[4px] ' + btn + ' text-[#555]">I</span></div>'
      + '<div class="flex"><div class="w-[152px]">'
      + '<div class="flex items-center h-[18px] mt-[2px]">'
      + '<svg class="ml-[2px] w-[13px] h-[11px] text-[#999]"><use href="#bars"/></svg>'
      + '<svg class="ml-[3px] w-[15px] h-[15px] text-[#8a8a8a]"><use href="#knob"/></svg>'
      + '<span class="ml-[4px] w-[33px] text-[#2d7ed6] font-medium">+0</span>'
      + '<svg class="w-[15px] h-[11px] text-[#999]"><use href="#panico"/></svg>'
      + '<svg class="ml-[2px] w-[15px] h-[15px] text-[#8a8a8a]"><use href="#knob"/></svg>'
      + '<span class="ml-[4px] w-[24px] text-[#2d7ed6] font-medium">0</span>'
      + '<svg class="w-[13px] h-[8px] text-[#999]"><use href="#radio"/></svg></div>'
      + '<div class="flex items-center h-[18px] mt-[1px]">'
      + '<svg class="ml-[3px] w-[11px] h-[8px] text-[#ddd]"><use href="#arrow-r"/></svg>'
      + '<div class="flex items-center ml-[4px] w-[115px] h-[15px] pl-[5px] pr-[4px] bg-[#222] rounded-[2px] text-[#b8b8b8]"><span>Default Stereo Input</span><svg class="ml-auto w-[5px] h-[7px]"><use href="#chev-r"/></svg></div>'
      + '<div class="flex items-center justify-center ml-[4px] w-[14px] h-[15px] bg-[#222] rounded-[2px] text-[#aaa]"><svg class="w-[11px] h-[11px]"><use href="#noslash"/></svg></div></div>'
      + '<div class="flex items-center h-[18px]">'
      + '<svg class="ml-[3px] w-[11px] h-[8px] text-[#ddd]"><use href="#arrow-l"/></svg>'
      + '<div class="flex items-center ml-[4px] w-[133px] h-[15px] pl-[5px] pr-[4px] bg-[#222] rounded-[2px] text-[#b8b8b8]"><span>Master</span><svg class="ml-auto w-[5px] h-[7px]"><use href="#chev-r"/></svg></div></div>'
      + '<div class="flex items-center h-[18px] mt-[12px]">'
      + '<svg class="ml-[5px] w-[5px] h-[7px] text-[#999]"><use href="#chev-r"/></svg>'
      + '<div class="flex items-center ml-[8px] w-[133px] h-[15px] pl-[5px] pr-[4px] bg-[#222] rounded-[2px] text-[#b8b8b8]"><span>' + (readText ? 'Read' : '') + '</span><svg class="ml-auto w-[7px] h-[5px]"><use href="#chev-d"/></svg></div></div>'
      + '</div>'
      + '<div class="relative ml-[3px] mt-[8px] w-[15px] h-[77px] bg-[#191919] border-t border-black"><div class="absolute left-[7px] top-0 h-[8px] w-[1px] bg-[#444]"></div><div class="absolute left-0 right-0 top-0 h-[1px] bg-[#444]"></div><div class="absolute bottom-[2px] left-[1px] w-[6px] h-[1px] bg-[#e6dc2a]"></div><div class="absolute bottom-[2px] right-[1px] w-[6px] h-[1px] bg-[#e6dc2a]"></div></div>'
      + '</div></div>';
  }

  const track1Bursts = [[2,55],[66,140],[145,164],[168,204],[205,236],[247,271],[275,300],[303,324],[328,352],[355,383],[390,412],[427,510]];
  const track3Bursts = [[660,730],[747,820]];
  const track5Bursts = [[24,84],[97,164],[167,213],[218,247],[259,297],[297,412],[431,489],[497,590]];

  const lane1 = '<div class="absolute left-0 top-0 w-[527px] h-full bg-[#0f5840] border-x-2 border-t border-[#e6eee8] text-[#e4e4e4]">'
    + '<span class="absolute left-[1px] top-[1px] text-[9px]">intro</span>'
    + '<svg class="absolute left-[9px] top-[11px] w-[11px] h-[11px]"><use href="#fade-in"/></svg>'
    + '<span class="absolute right-[17px] top-[0px] text-[9px]">Volume</span>'
    + '<svg class="absolute right-[4px] top-[3px] w-[7px] h-[5px]"><use href="#chev-d"/></svg>'
    + '<svg class="absolute right-[9px] top-[11px] w-[11px] h-[11px]"><use href="#fade-out"/></svg></div>'
    + '<svg class="absolute inset-0 w-[919px] h-[112px]">'
    + '<path d="' + wavePath(track1Bursts, 61, 26, 7) + 'M3.500 36V88" stroke="#45d6a3" fill="none"/>'
    + '<path d="M2 47.500H525" stroke="#f3f0a0" stroke-width="1.600"/><path d="M2 61.500H525" stroke="#8fe3cc"/></svg>';

  const lane3 = '<div class="absolute left-0 top-0 w-[833px] h-full bg-[#2f2f2f]">'
    + '<span class="absolute right-[29px] top-[3px] text-[#a0a0a0]">Volume</span>'
    + '<svg class="absolute right-[7px] top-[6px] w-[7px] h-[5px] text-[#a0a0a0]"><use href="#chev-d"/></svg></div>'
    + '<svg class="absolute inset-0 w-[919px] h-[114px]">'
    + '<path d="' + wavePath(track3Bursts, 64, 26, 21) + '" stroke="#ababab" fill="none"/>'
    + '<path d="M0 51.500H833" stroke="#8f8f6e" stroke-width="1.400"/><path d="M0 64.500H833" stroke="#9fb8c6"/></svg>';

  const lane5 = '<div class="absolute left-0 top-0 w-[607px] h-full bg-[#2e2e2e]">'
    + '<svg class="absolute left-[7px] bottom-[8px] w-[9px] h-[7px] text-[#999]"><use href="#bars"/></svg></div>'
    + '<svg class="absolute inset-0 w-[919px] h-[111px]">'
    + '<path d="' + wavePath(track5Bursts, 61, 28, 33) + '" stroke="#ababab" fill="none"/>'
    + '<path d="M0 47.500H607" stroke="#8f8f6e" stroke-width="1.400"/><path d="M0 61.500H607" stroke="#9fb8c6"/></svg>';

  const lane6 = '<div class="absolute left-0 top-0 w-[832px] h-full bg-[#2e2e2e]">'
    + '<span class="absolute left-[1px] top-[1px] text-[#aaa] text-[9px]">suddenly 44100 1</span>'
    + '<span class="absolute right-[12px] top-[1px] text-[#a0a0a0] text-[9px]">Pan</span>'
    + '<svg class="absolute right-[1px] top-[4px] w-[7px] h-[5px] text-[#a0a0a0]"><use href="#chev-d"/></svg></div>'
    + '<div class="absolute left-[832px] top-[0px] right-0 h-full border-l border-[#2e2e2e] bg-[#1d1d1d]"></div>';

  // tracks 2-4 sit behind the rack window, so their headers stay empty
  const trackRows = [
    { h: 'h-[114px]', name: 'Track 1', solo: true, strip: 'bg-[#35ad85]', lane: 'bg-[#4a4a4a]', html: lane1 },
    { h: 'h-[111px]', strip: 'bg-[#5a4a6e]', lane: 'bg-[#1f1f1f]', html: '' },
    { h: 'h-[117px]', strip: 'bg-[#66643e]', lane: 'bg-[#1f1f1f]', html: lane3 },
    { h: 'h-[114px]', strip: 'bg-[#46605e]', lane: 'bg-[#1f1f1f]', html: '' },
    { h: 'h-[114px]', name: 'Track 5', read: true, strip: 'bg-[#3d1f4f]', lane: 'bg-[#1d1d1d]', html: lane5 },
    { h: 'h-[15px]', name: 'Track 6', strip: 'bg-[#2f3d1e]', lane: 'bg-[#1d1d1d]', html: lane6, last: true }
  ];
  document.getElementById('tracks').innerHTML = trackRows.map(function (t) {
    return '<div class="flex overflow-hidden shrink-0 ' + t.h + ' ' + (t.last ? '' : 'border-b-2 border-[#333]') + '">'
      + '<div class="w-[12px] shrink-0 ' + t.strip + '"></div>'
      + (t.name ? trackHeader(t.name, t.solo, t.read) : '<div class="w-[172px] bg-[#2e2e2e]"></div>')
      + '<div class="w-[3px] shrink-0 bg-[#2e2e2e]"><div class="w-[2px] h-full ml-[1px] bg-[#6e6e6e]"></div></div>'
      + '<div class="relative w-[920px] shrink-0 ' + t.lane + '">' + t.html + '</div></div>';
  }).join('');

  // colored track overview beside the lanes
  const scrollSegs = [
    ['#52b795', 47], ['#594a70', 46], ['#66643e', 47], ['#46605e', 46], ['#5c4468', 46],
    ['#2f3d1e', 40], ['#15304f', 46], ['#451a3c', 46], ['#1a4428', 45], ['#2b2b58', 45], ['#46321a', 46], ['#15304f', 46]
  ];
  document.getElementById('track-scroll').innerHTML = scrollSegs.map(function (s, i) {
    return '<div class="shrink-0" style="height:' + s[1] + 'px;background:' + s[0] + (i === 5 ? ';margin-top:7px' : '') + '"></div>';
  }).join('') + '<div class="absolute -left-[1px] -right-[1px] top-[-1px] h-[250px] border-2 border-[#555] rounded-[3px]"></div>';

  // zoom tools at the right of the transport bar
  const zoomExtras = [
    ['<path d="M1 1v14M0 1h3M0 15h3" stroke="currentColor"/>', 'plus'],
    ['<path d="M1 1v14M0 1h3M0 15h3" stroke="currentColor"/>', 'minus'],
    ['<path d="M0 1h16M0 0v3M16 0v3" stroke="currentColor"/>', 'plus'],
    ['<path d="M0 1h16M0 0v3M16 0v3" stroke="currentColor"/>', 'minus', true],
    ['<path d="M4 2l5-2 5 2M4 14l5 2 5-2M1 8l2-2v4zM17 8l-2-2v4z" stroke="currentColor" fill="none"/>', 'none'],
    ['<path d="M3 4 0.500 8 3 12" stroke="currentColor" fill="none"/>', 'none'],
    ['<path d="M0.500 4 3 8 0.500 12" stroke="currentColor" fill="none"/>', 'none'],
    ['<path d="M3 4 0.500 8 3 12M4 4l2 4-2 4" stroke="currentColor" fill="none"/>', 'none'],
    ['<path d="M4 3a5 5 0 1 0 5-1M7 0v3h3" stroke="currentColor" fill="none"/>', 'clock'],
    ['<path d="M3 1v14M0 1h6M0 15h6M0 8h6" stroke="currentColor"/>', 'plus']
  ];
  document.getElementById('zoom-icons').innerHTML = zoomExtras.map(function (z) {
    if (z[1] === 'clock') {
      return '<div class="w-[25.400px] flex justify-center text-[#aaa]"><svg class="w-[14px] h-[15px]" viewBox="0 0 14 15">' + z[0] + '<path d="M7 5v3h3" stroke="currentColor" fill="none"/><circle cx="7.500" cy="8" r="5" fill="none" stroke="currentColor"/></svg></div>';
    }
    const sign = z[1] === 'plus' ? '<path d="M9 4v6M6 7h6" stroke="currentColor"/>' : z[1] === 'minus' ? '<path d="M6 7h6" stroke="currentColor"/>' : '';
    return '<div class="w-[25.400px] flex justify-center ' + (z[2] ? 'text-[#4a4a4a]' : 'text-[#aaa]') + '"><svg class="w-[18px] h-[16px]" viewBox="0 0 18 16">' + z[0]
      + '<circle cx="9" cy="7" r="4.500" fill="none" stroke="currentColor" stroke-width="1.200"/><path d="M12.500 10.500 16 14" stroke="currentColor" stroke-width="1.800"/>' + sign + '</svg></div>';
  }).join('');

  // levels scale
  let lvlTicks = '', lvlLabels = '<span class="absolute left-0">dB</span>';
  for (let i = 0; i <= 57; i++) {
    const x = 2 + i * 15.72 + 6;
    lvlTicks += '<line x1="' + x + '" x2="' + x + '" y1="0" y2="' + (i % 3 === 0 ? 4 : 2) + '" stroke="#666"/>';
  }
  document.getElementById('lvl-ticks').innerHTML = lvlTicks;
  for (let db = -57; db <= 0; db += 3) {
    const x = 50 + (db + 57) * 15.72;
    lvlLabels += '<span class="absolute w-[20px] text-center" style="left:' + (x - 10) + 'px">' + db + '</span>';
  }
  document.getElementById('lvl-scale').innerHTML = lvlLabels;

  // vertical sliders of the dialog
  function vslider(o) {
    const top = 5, span = 144;
    let labels = '', ticks = '';
    o.labels.forEach(function (l, i) {
      const y = l.length > 1 ? l[1] : top + span * i / (o.labels.length - 1);
      labels += '<span class="absolute right-[calc(50%+5px)] whitespace-nowrap" style="top:' + (y - 6) + 'px">' + l[0] + '</span>';
      ticks += '<div class="absolute right-[calc(50%+0px)] w-[3px] h-[1px] bg-[#777]" style="top:' + y + 'px"></div>';
    });
    return '<div class="flex flex-col items-center shrink-0" style="width:' + o.w + 'px;margin-left:' + (o.ml || 0) + 'px">'
      + '<div class="h-[14px] leading-[14px] whitespace-nowrap">' + o.label + '</div>'
      + '<div class="relative mt-[6px] w-full h-[154px]">' + labels + ticks
      + '<div class="absolute left-1/2 top-[5px] h-[144px] border-l border-dotted border-[#888]"></div>'
      + '<div class="absolute left-[calc(50%-5px)] w-[11px] h-[11px] rounded-full border-2 border-[#a4a4a4] bg-[#232323]" style="top:' + (o.knob - 5) + 'px"></div></div>'
      + '<div class="mt-[7px] h-[14px] leading-[14px] text-[#2d84e0] font-medium">' + o.value + '</div>'
      + '<div class="h-[14px] leading-[14px]">' + o.unit + '</div></div>';
  }
  function meters(w, ml) {
    const names = ['L', 'R', 'C', 'LFE', 'Ls', 'Rs'];
    return '<div class="flex shrink-0" style="margin-left:' + ml + 'px">' + names.map(function (n) {
      return '<div class="flex flex-col items-center" style="width:' + w + 'px">'
        + '<div class="mt-[2px] h-[14px] leading-[14px]">' + n + '</div>'
        + '<div class="relative mt-[14px] w-[5px] h-[143px] bg-[repeating-linear-gradient(0deg,#000_0,#000_2px,#202020_2px,#202020_3px)]"><div class="absolute bottom-[1px] inset-x-0 h-[3px] bg-[#f2e600]"></div></div></div>';
    }).join('') + '</div>';
  }
  const pct = [100, 90, 80, 70, 60, 50, 40, 30, 20, 10, 0].map(function (v) { return [v]; });
  const bal = [100, 80, 60, 40, 20, 0, -20, -40, -60, -80, -100].map(function (v) { return [v]; });
  const gain = [[18, 0], [15, 18], [10, 38], [5, 58], [0, 78], [-5, 98], [-10, 118], [-15, 138], [-18, 155]];

  document.getElementById('input-group').innerHTML =
    vslider({ label: 'Center:', w: 43, labels: pct, knob: 5, value: '100', unit: '%' })
    + vslider({ label: 'LFE:', w: 39, ml: 4, labels: pct, knob: 72, value: '53', unit: '%' })
    + meters(14, 0);

  document.getElementById('output-group').innerHTML =
    vslider({ label: 'C Wet Level:', w: 60, labels: pct, knob: 99, value: '34', unit: '%' })
    + vslider({ label: 'L/R Bal:', w: 52, labels: bal, knob: 76, value: '0', unit: '%' })
    + vslider({ label: 'F/B Bal:', w: 41, labels: bal, knob: 76, value: '0', unit: '%' })
    + vslider({ label: 'Mix:', w: 52, labels: pct, knob: 69, value: '55', unit: '%' })
    + vslider({ label: 'Gain:', w: 27, labels: gain, knob: 59, value: '4.4', unit: 'dB' })
    + meters(14.4, 7);

  // horizontal sliders
  const scaleA = [[10, 4.5], [20, 31], [30, 52.7], [40, 75], [50, 97], [60, 119.5], [70, 141.5], [80, 163.6], [90, 185], [100, 207.6]];
  const scaleB = [[0, 9], [20, 48.5], [40, 88.5], [60, 128], [80, 167.7], [100, 207.6]];
  const scaleC = [[0, 9], [50, 41.7], [100, 75.4], [150, 107.8], [200, 141], [250, 174.6], [300, 207.6]];
  const sliderRows = [
    ['Room Size:', scaleA, 207.6, '100', '%'],
    ['Damping LF:', scaleA, 98.5, '51', '%'],
    ['Damping HF:', scaleA, 110.5, '56', '%'],
    ['Pre-Delay:', scaleB, 8, '0', 'ms'],
    ['Front Width:', scaleC, 81, '110', '%'],
    ['Surround Width:', scaleC, 81, '110', '%']
  ];
  document.getElementById('reverb-rows').innerHTML = sliderRows.map(function (r) {
    let labels = '', marks = '';
    r[1].forEach(function (p) {
      labels += '<span class="absolute top-[1px] w-[24px] text-center text-[#7e7e7e]" style="left:' + (p[1] - 12) + 'px">' + p[0] + '</span>';
    });
    const x0 = 8, x1 = 207.6;
    for (let i = 0; i < r[1].length - 1; i++) {
      const a = i === 0 ? x0 : r[1][i][1], b = i === r[1].length - 2 ? x1 : r[1][i + 1][1];
      const subs = r[1] === scaleB ? 2 : 5;
      for (let s = 0; s <= subs; s++) {
        const x = a + (b - a) * s / subs;
        marks += '<path d="M' + x.toFixed(1) + ' 13V' + (s === 0 || s === subs ? 17 : 16) + '" stroke="#777"/>';
      }
    }
    return '<div class="flex items-center h-[28.300px]">'
      + '<span class="w-[78px] text-right whitespace-nowrap">' + r[0] + '</span>'
      + '<div class="relative ml-[3px] w-[216px] h-[28px]">' + labels
      + '<svg class="absolute inset-0 w-[216px] h-[28px]">' + marks + '<path d="M8 17H207.600" stroke="#666"/></svg>'
      + '<div class="absolute top-[12px] w-[11px] h-[11px] rounded-full border-2 border-[#a4a4a4] bg-[#232323]" style="left:' + (r[2] - 5) + 'px"></div></div>'
      + '<span class="w-[26px] text-right text-[#2d84e0] font-medium">' + r[3] + '</span>'
      + '<span class="ml-[2px]">' + r[4] + '</span></div>';
  }).join('');
</script>
</body>
</html>
